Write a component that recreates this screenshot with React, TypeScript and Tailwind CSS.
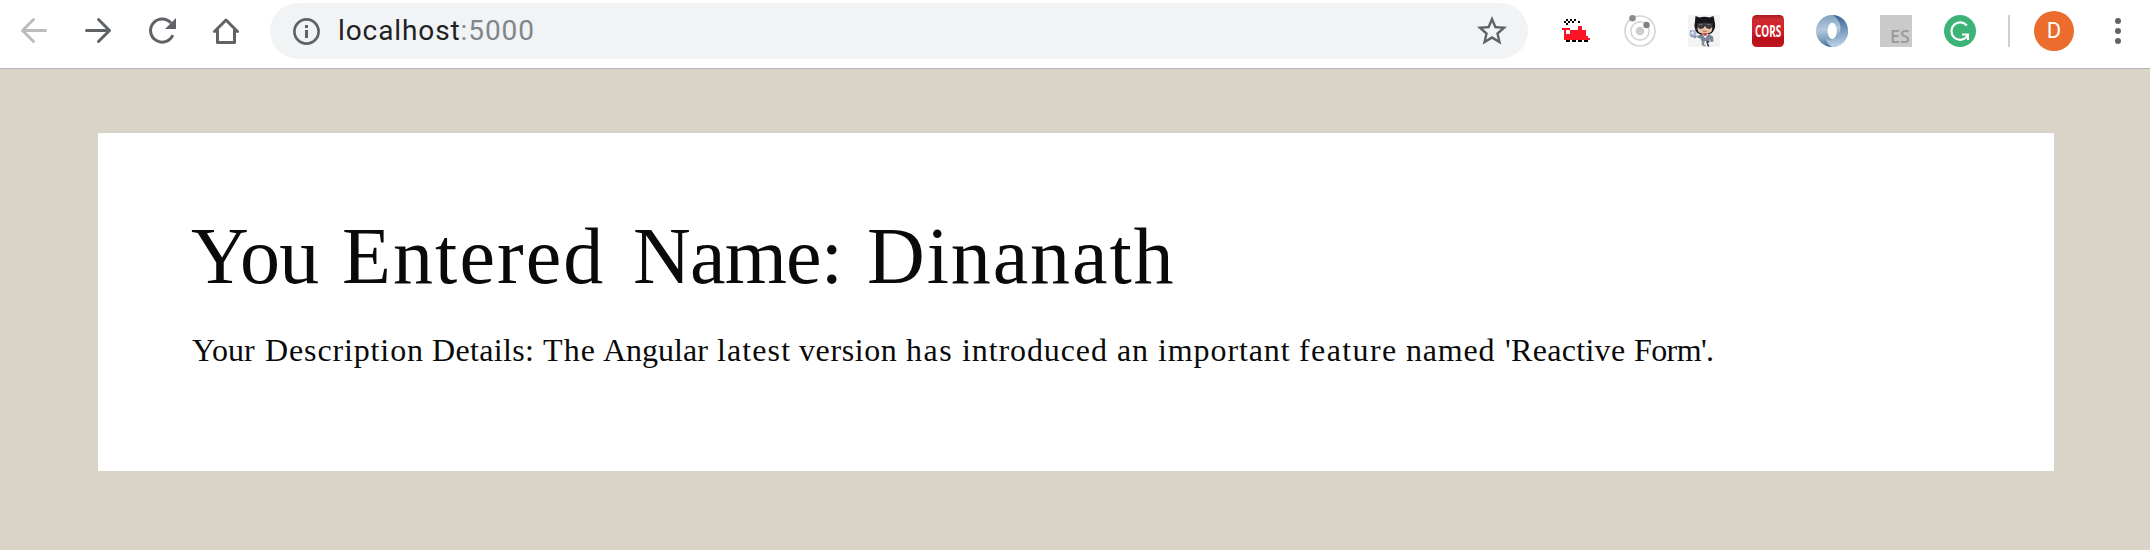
import React from "react";

const GREY = "#5f6368";

function NavIcon({ x, children }: { x: number; children: React.ReactNode }) {
  return (
    <svg
      className="h-14 w-16 shrink-0"
      viewBox={`${x} 3 64 56`}
      fill="none"
      stroke={GREY}
      strokeWidth={3}
      strokeLinecap="round"
      strokeLinejoin="round"
    >
      {children}
    </svg>
  );
}

function InfoIcon() {
  return (
    <svg className="size-[27px] shrink-0" viewBox="0 0 27 27">
      <circle cx="13.5" cy="13.5" r="12.1" fill="none" stroke={GREY} strokeWidth="2.7" />
      <path d="M12 7h3v3h-3zM12 12h3v8h-3z" fill={GREY} />
    </svg>
  );
}

function StarIcon() {
  return (
    <svg className="size-9 shrink-0" viewBox="0 0 24 24" fill={GREY}>
      <path d="M22 9.24l-7.19-.62L12 2 9.19 8.63 2 9.24l5.46 4.73L5.82 21 12 17.27 18.18 21l-1.63-7.03L22 9.24zM12 15.4l-3.76 2.27 1-4.28-3.32-2.88 4.38-.38L12 6.1l1.71 4.04 4.38.38-3.32 2.88 1 4.28L12 15.4z" />
    </svg>
  );
}

function TrainIcon() {
  return (
    <svg className="size-8" viewBox="0 0 32 32">
      <path
        fill="#000"
        d="M6 4h2v2h-2zM10 4h2v2h-2zM14 4h2v2h-2zM4 6h2v2h-2zM8 6h2v2h-2zM12 6h2v2h-2zM18 6h2v2h-2zM6 8h2v2h-2z"
      />
      <path
        fill="#fb1423"
        fillRule="evenodd"
        d="M2 13h8v2h8v-4h4v4h4v6h2v2h2v2h-26v-10h-2zM6 15v4h4v-4z"
      />
      <path fill="#000" d="M6 25h4v2h-4zM12 25h4v2h-4zM18 25h4v2h-4zM24 25h4v2h-4z" />
    </svg>
  );
}

function OrbitIcon() {
  return (
    <svg className="size-8" viewBox="0 0 32 32">
      <g fill="none" stroke="#d6d6d6" strokeWidth="1.7">
        <circle cx="16" cy="16" r="15" />
        <circle cx="16" cy="16" r="9.2" />
      </g>
      <circle cx="16" cy="16" r="4.3" fill="#cdcdcd" />
      <circle cx="8.5" cy="3.3" r="3.3" fill="#8c8c8c" />
      <circle cx="22.500" cy="10" r="3.2" fill="#808080" />
    </svg>
  );
}

function AgentCatIcon() {
  return (
    <svg className="size-8" viewBox="0 0 32 32">
      <rect width="32" height="32" fill="#f3f3f3" />
      <path d="M14 24l3 1-1 4 2 2-2 .5-2.500-2z" fill="#8a8d92" />
      <path d="M17.500 24l3.500 0 .5 3-1.500 1 1.500 3.500h-2z" fill="#3c414c" />
      <path d="M11.500 19.500q5-1.500 10 0l3.500 2 .5 5-2.500.5-1.500-3-.5 2h-7.500l-1-2.500-3.500-1z" fill="#76859a" />
      <path d="M7.500 1l4 1.500q5-1.500 10 0L25.500 1l1 5q1.500 5-.5 9-1.500 3.500-5.500 4.500h-7.500Q8.500 18.500 7.300 15q-1.500-4.500-.3-9z" fill="#17171b" />
      <path d="M9.800 11q7-4 14 0 1.500 4-1.500 6.500-5.500 2.500-11 0Q8.800 15 9.800 11z" fill="#e8c3a4" />
      <path d="M9 8.500q8-1.300 15.800 0l-.5 3q-1 2.800-4 2.300-2.500-.5-3.300-3-.8 2.500-3.300 3-3.200.5-4.200-2.300z" fill="#3a3a3e" />
      <path d="M10.500 10l4-.8M18.500 9.200l4 .8" stroke="#77777c" strokeWidth=".9" />
      <path d="M14.800 16.300h4" stroke="#7c5b4c" strokeWidth=".8" />
      <path d="M14 18.800h6.500l-3.200 4.500z" fill="#fff" />
      <path d="M15 18.300h4l-.5 2.500h-3z" fill="#d33535" />
      <circle cx="5" cy="18.500" r="3.400" fill="#a7b5c9" />
      <circle cx="4.500" cy="17.800" r="1.500" fill="#e1e8f0" />
      <path d="M2 20.500l3 1.500 5-1M2 15.500l1.500 1M8 14.500l-1 1.500M6 22l2 1" fill="none" stroke="#7587a0" strokeWidth="1" />
    </svg>
  );
}

function CorsIcon() {
  return (
    <svg className="size-8 overflow-visible" viewBox="0 0 32 32">
      <defs>
        <linearGradient id="cors" x1="0" y1="0" x2="0" y2="1">
          <stop offset="0" stopColor="#a91a20" />
          <stop offset=".14" stopColor="#cf2a30" />
          <stop offset=".48" stopColor="#d51f27" />
          <stop offset=".75" stopColor="#b80f18" />
          <stop offset="1" stopColor="#bd1820" />
        </linearGradient>
      </defs>
      <rect width="32" height="32" rx="4.500" fill="url(#cors)" />
      <text
        x="3"
        y="21.700"
        fill="#fff"
        fontFamily="Open Sans, sans-serif"
        fontWeight="700"
        fontSize="15.500"
        textLength="26.300"
        lengthAdjust="spacingAndGlyphs"
      >
        CORS
      </text>
    </svg>
  );
}

function SwirlIcon() {
  return (
    <svg className="size-8" viewBox="0 0 32 32">
      <defs>
        <linearGradient id="swirlA" x1=".3" y1="0" x2=".4" y2="1">
          <stop offset="0" stopColor="#7f9fc0" />
          <stop offset=".45" stopColor="#b4c9dd" />
          <stop offset=".75" stopColor="#7e9ec0" />
          <stop offset="1" stopColor="#3d6795" />
        </linearGradient>
        <linearGradient id="swirlB" x1=".4" y1="0" x2=".5" y2="1">
          <stop offset="0" stopColor="#35608f" />
          <stop offset=".5" stopColor="#7499bd" />
          <stop offset="1" stopColor="#c2d4e5" />
        </linearGradient>
      </defs>
      <circle cx="16" cy="16" r="16" fill="url(#swirlA)" />
      <path
        d="M17 0C26 .5 32 7 32 16c0 9.500-7.500 16.500-16 16-4-2-6-5-6.500-9 1.500 1.500 4 2 6.500 1.500C20 24 24.500 20 24.500 12.500 24.500 8 21.500 3.500 17 0z"
        fill="url(#swirlB)"
      />
      <ellipse cx="16.200" cy="16" rx="4.600" ry="8.200" fill="#fff" />
    </svg>
  );
}

function GrammarIcon() {
  return (
    <svg className="size-8" viewBox="0 0 32 32">
      <circle cx="16" cy="16" r="16" fill="#3db378" />
      <g fill="none" stroke="#fff" strokeWidth="2.2">
        <path d="M22.800 10.500A8.700 8.700 0 1 0 22.500 22L24 20" />
        <path d="M18 19.500H24V25" strokeWidth="2.1" />
      </g>
    </svg>
  );
}

function ExtensionSlot({ children }: { children: React.ReactNode }) {
  return <div className="flex w-16 shrink-0 items-center justify-center">{children}</div>;
}

function Toolbar() {
  return (
    <header className="flex h-[69px] shrink-0 items-start border-b border-[#b5b5b8] bg-white pt-[3px] pl-0.5">
      <NavIcon x={2}>
        <path d="M45.500 30.500H22.500M33.500 19.500L22.500 30.500 33.500 41.500" stroke="#babcbe" />
      </NavIcon>
      <NavIcon x={66}>
        <path d="M86.500 30.500H109.500M98.500 19.500L109.500 30.500 98.500 41.500" />
      </NavIcon>
      <NavIcon x={130}>
        <path d="M171 23A11.600 11.600 0 1 0 172.800 35.200" strokeLinecap="butt" />
        <path d="M176 18V29H165z" fill={GREY} stroke="none" />
      </NavIcon>
      <NavIcon x={194}>
        <path d="M214.500 31.500L226 20 237.500 31.500M217.500 30V42.500H234.500V30" />
      </NavIcon>
      <div className="ml-3 flex h-14 w-[1258px] shrink-0 items-center rounded-full bg-[#f1f3f4] pr-[18px] pl-[23px]">
        <InfoIcon />
        <span className="ml-[18px] flex-1 font-['Roboto',sans-serif] text-[28px] leading-none tracking-[0.9px] text-[#202124]">
          localhost<span className="text-[#80868b]">:5000</span>
        </span>
        <StarIcon />
      </div>
      <div className="ml-4 flex h-14 items-center">
        <ExtensionSlot><TrainIcon /></ExtensionSlot>
        <ExtensionSlot><OrbitIcon /></ExtensionSlot>
        <ExtensionSlot><AgentCatIcon /></ExtensionSlot>
        <ExtensionSlot><CorsIcon /></ExtensionSlot>
        <ExtensionSlot><SwirlIcon /></ExtensionSlot>
        <ExtensionSlot>
          <div className="flex size-8 items-end justify-end bg-[#cacaca] pr-0.5 pb-px font-['Noto_Sans',sans-serif] text-[18px] leading-[19px] font-medium text-[#999]">
            ES
          </div>
        </ExtensionSlot>
        <ExtensionSlot><GrammarIcon /></ExtensionSlot>
        <div className="ml-4 h-8 w-0.5 bg-[#cdced0]" />
        <div className="ml-6 flex size-10 items-center justify-center rounded-full bg-[#ec6c2e] font-['Roboto',sans-serif] text-[22px] leading-none text-white">
          D
        </div>
        <svg className="ml-[41px] h-8 w-1.5" viewBox="0 0 6 32" fill={GREY}>
          <circle cx="3" cy="6" r="3" />
          <circle cx="3" cy="16" r="3" />
          <circle cx="3" cy="26" r="3" />
        </svg>
      </div>
    </header>
  );
}

type Word = [text: string, className: string];

const HEADING: Word[] = [
  ["You", "w-[151px] tracking-[-0.8px]"],
  ["Entered", "w-[291px] tracking-[2.1px]"],
  ["Name:", "w-[234px] tracking-[-0.8px]"],
  ["Dinanath", "tracking-[1.9px]"],
];

const DESCRIPTION: Word[] = [
  ["Your", "w-[73px]"],
  ["Description", "w-[167px] tracking-[0.87px]"],
  ["Details:", "w-[111px] tracking-[0.34px]"],
  ["The", "w-[60px] tracking-[1.1px]"],
  ["Angular", "w-[114px]"],
  ["latest", "w-[82px] tracking-[1.1px]"],
  ["version", "w-[107px] tracking-[0.6px]"],
  ["has", "w-[56px] tracking-[1.5px]"],
  ["introduced", "w-[155px] tracking-[0.9px]"],
  ["an", "w-[41px] tracking-[0.7px]"],
  ["important", "w-[141px] tracking-[0.9px]"],
  ["feature", "w-[107px] tracking-[1.4px]"],
  ["named", "w-[99px] tracking-[0.8px]"],
  ["'Reactive", "w-[129px] tracking-[0.3px]"],
  ["Form'.", "tracking-[-0.6px]"],
];

function Words({ words }: { words: Word[] }) {
  return (
    <>
      {words.map(([text, className]) => (
        <span key={text} className={`inline-block ${className}`}>
          {text}{" "}
        </span>
      ))}
    </>
  );
}

export default function App() {
  return (
    <div className="flex h-[550px] w-[2150px] flex-col overflow-hidden bg-[#dad3c8]">
      <Toolbar />
      <main className="mt-16 ml-[98px] h-[338px] w-[1956px] bg-white pt-[75px] pl-[94px] font-['Liberation_Serif',serif] text-[#0a0a0a]">
        <h1 className="-ml-px text-[80px] leading-[96px] whitespace-nowrap">
          <Words words={HEADING} />
        </h1>
        <p className="mt-[22px] text-[32px] leading-[48px] whitespace-nowrap">
          <Words words={DESCRIPTION} />
        </p>
      </main>
    </div>
  );
}
